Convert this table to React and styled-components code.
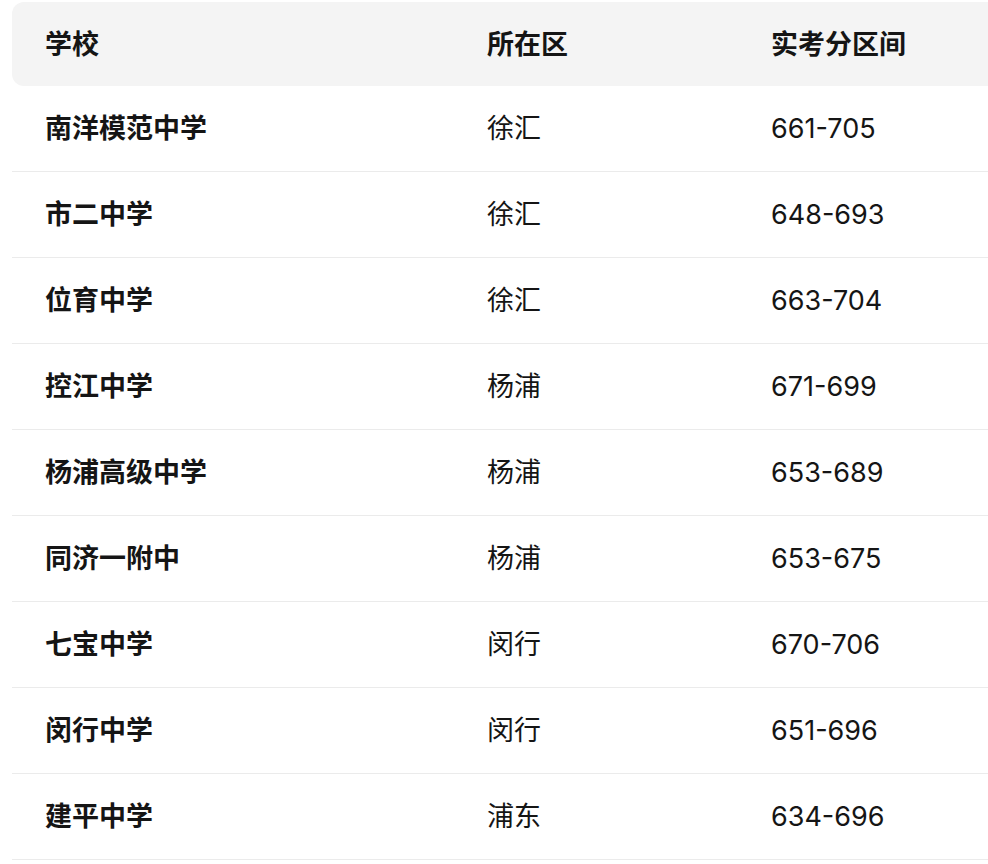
import styled, { createGlobalStyle } from "styled-components";

const rows = [
    { school: "南洋模范中学", district: "徐汇", range: "661-705" },
    { school: "市二中学", district: "徐汇", range: "648-693" },
    { school: "位育中学", district: "徐汇", range: "663-704" },
    { school: "控江中学", district: "杨浦", range: "671-699" },
    { school: "杨浦高级中学", district: "杨浦", range: "653-689" },
    { school: "同济一附中", district: "杨浦", range: "653-675" },
    { school: "七宝中学", district: "闵行", range: "670-706" },
    { school: "闵行中学", district: "闵行", range: "651-696" },
    { school: "建平中学", district: "浦东", range: "634-696" },
];

const GlobalStyle = createGlobalStyle`
    html, body {
        margin: 0;
        background: #ffffff;
        overflow: hidden;
    }
    body {
        font-family: Inter, "Noto Sans CJK SC", sans-serif;
        color: #151515;
    }
`;

export default function App() {
    return (
        <Page>
            <GlobalStyle />
            <Table>
                <colgroup>
                    <col style={{ width: 442 }} />
                    <col style={{ width: 284 }} />
                    <col />
                </colgroup>
                <thead>
                    <tr>
                        <Th>学校</Th>
                        <Th>所在区</Th>
                        <Th>实考分区间</Th>
                    </tr>
                </thead>
                <tbody>
                    {rows.map((row) => (
                        <tr key={row.school}>
                            <Td $bold>{row.school}</Td>
                            <Td>{row.district}</Td>
                            <Td>{row.range}</Td>
                        </tr>
                    ))}
                </tbody>
            </Table>
        </Page>
    );
}

const Page = styled.div`
    padding: 2px 0 0 12px;
`;

const Table = styled.table`
    width: 1010px;
    border-collapse: separate;
    border-spacing: 0;
    table-layout: fixed;
`;

const Th = styled.th`
    height: 84px;
    padding: 0 33px;
    background: #f4f4f4;
    text-align: left;
    font-size: 27px;
    font-weight: 700;
    line-height: 1;
    &:first-child {
        border-radius: 12px 0 0 12px;
    }
`;

const Td = styled.td`
    height: 85px;
    padding: 0 33px;
    border-bottom: 1.5px solid #ebebeb;
    font-size: 27px;
    font-weight: ${(p) => (p.$bold ? 700 : 400)};
    line-height: 1;
    white-space: nowrap;
`;
